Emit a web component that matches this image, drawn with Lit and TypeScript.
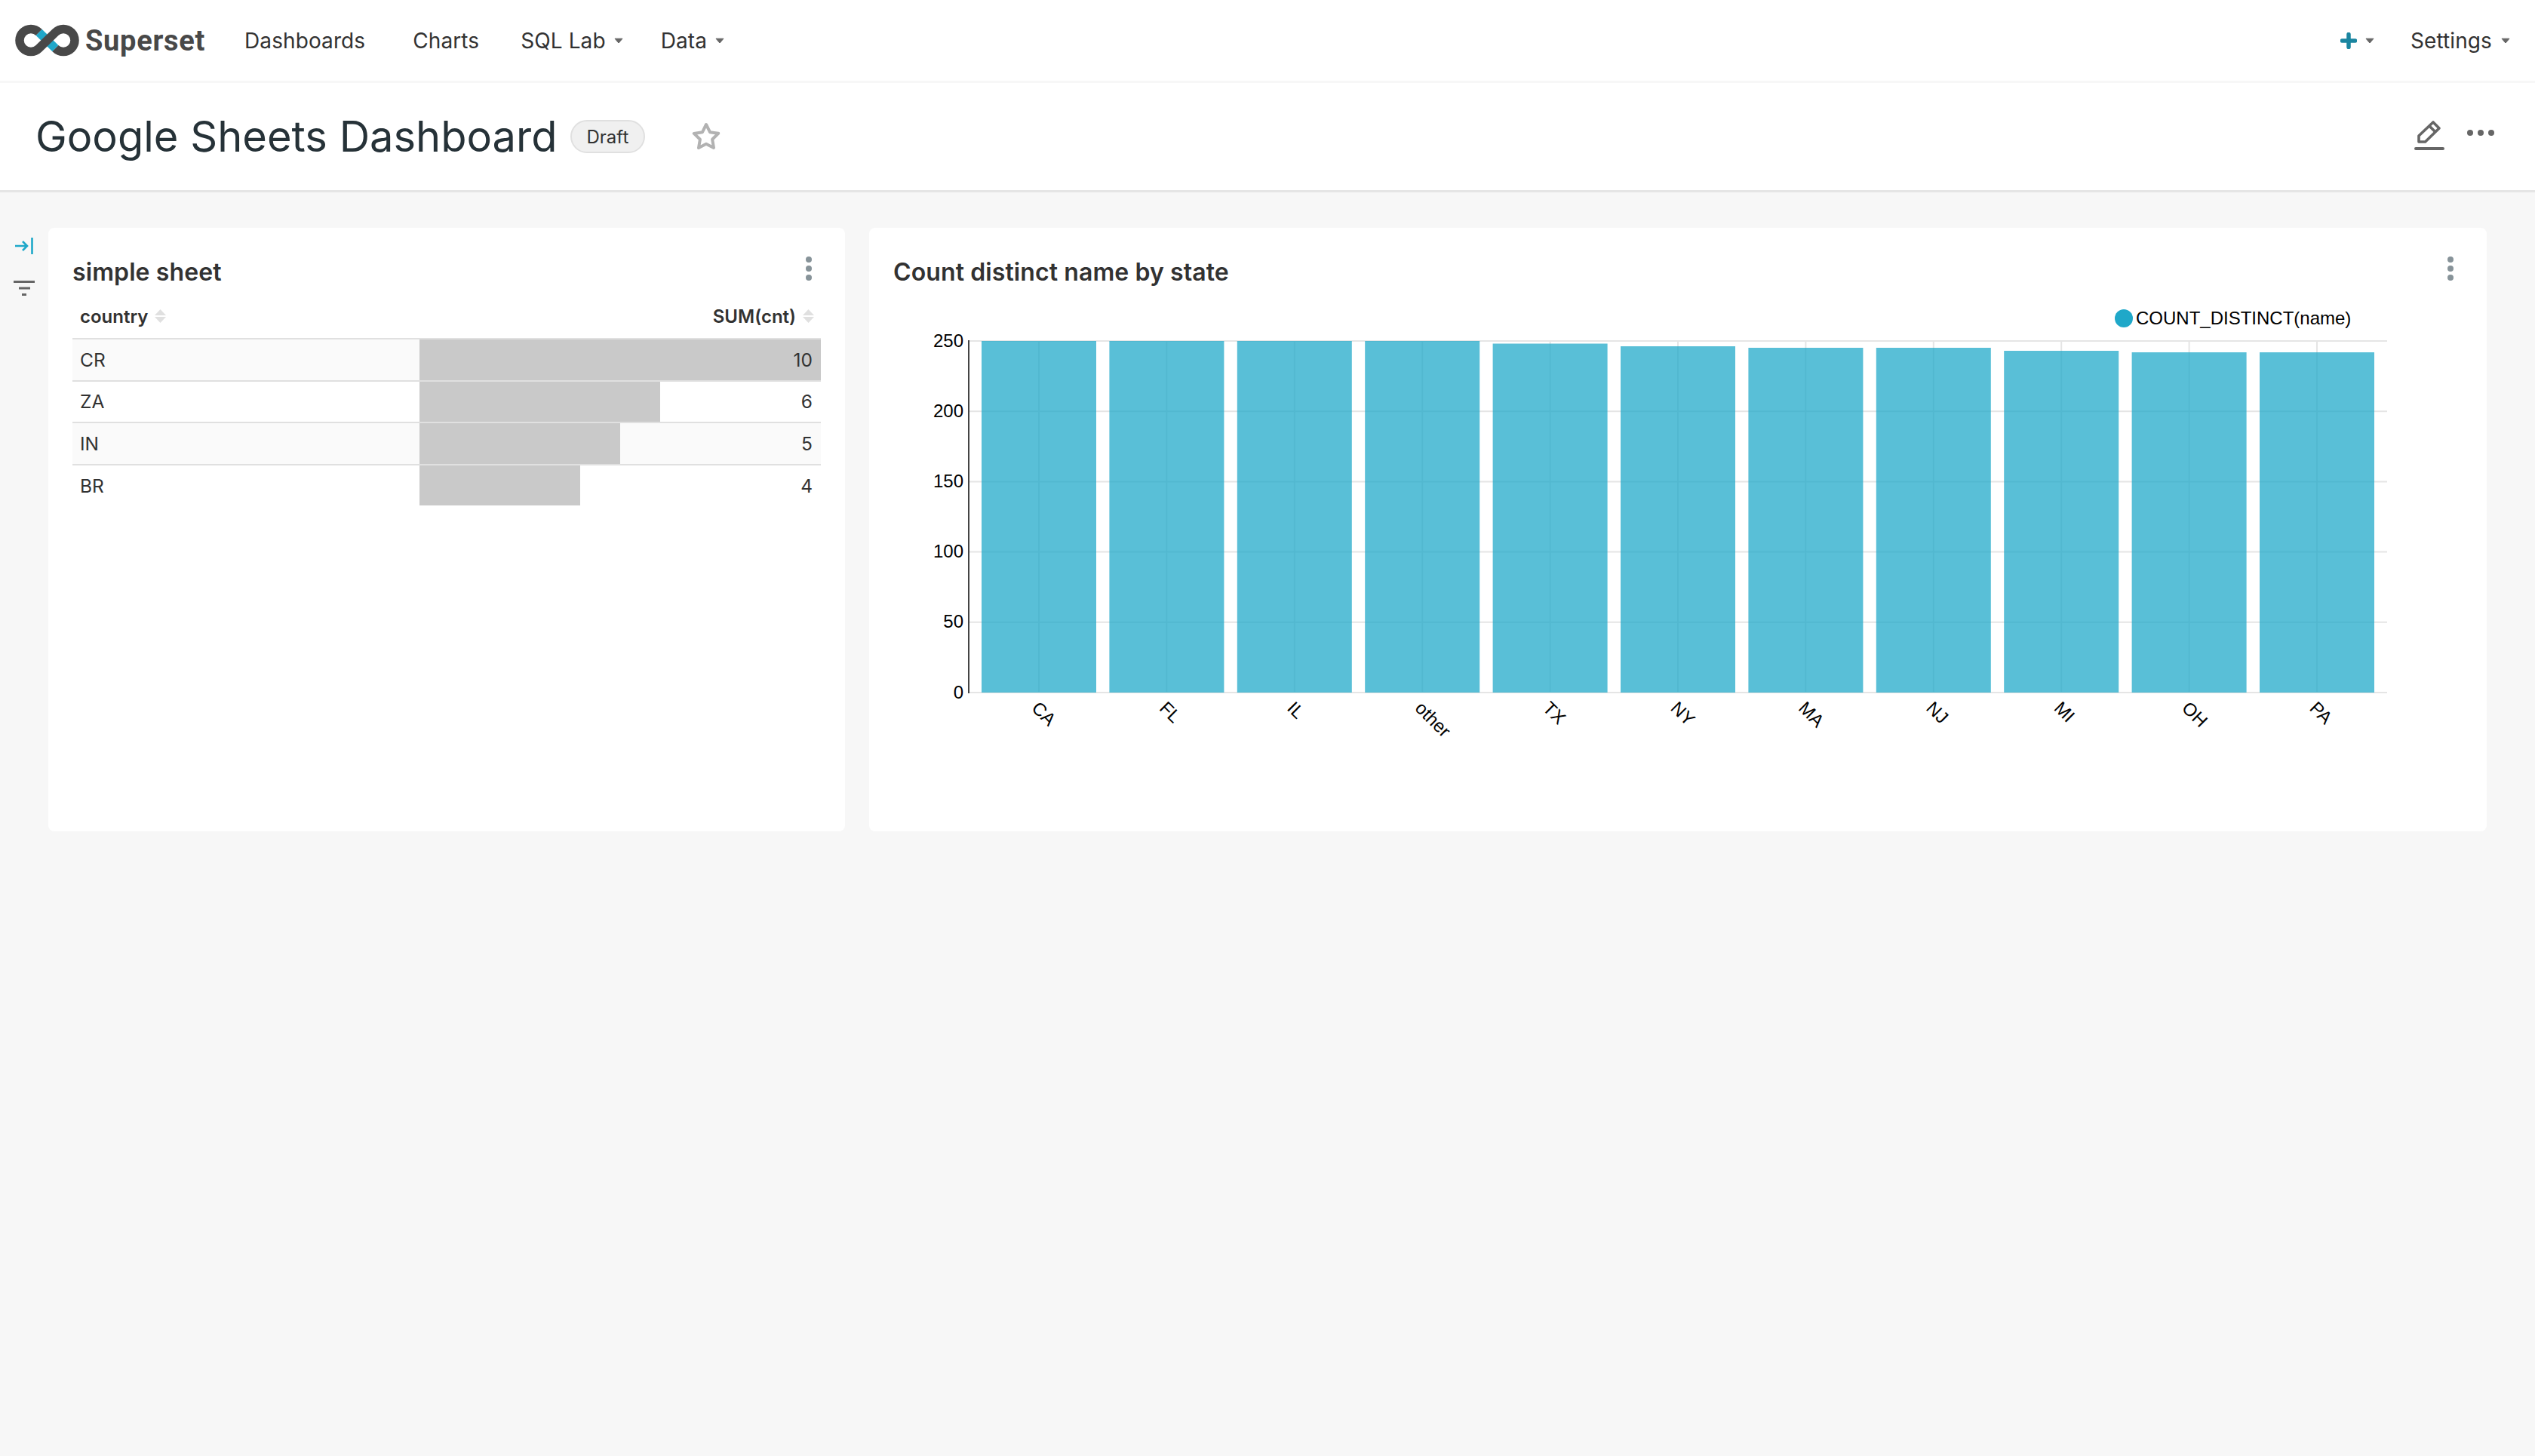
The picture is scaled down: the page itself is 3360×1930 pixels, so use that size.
import { LitElement, html, svg, css } from "lit";
import { customElement } from "lit/decorators.js";

const rows = [
  { country: "CR", cnt: 10 },
  { country: "ZA", cnt: 6 },
  { country: "IN", cnt: 5 },
  { country: "BR", cnt: 4 },
];

// top of each bar, measured in page pixels
const bars = [
  { state: "CA", top: 452 },
  { state: "FL", top: 452 },
  { state: "IL", top: 452 },
  { state: "other", top: 452 },
  { state: "TX", top: 455.5 },
  { state: "NY", top: 459 },
  { state: "MA", top: 461 },
  { state: "NJ", top: 461 },
  { state: "MI", top: 465 },
  { state: "OH", top: 467 },
  { state: "PA", top: 467 },
];

const caret = html`<svg class="caret" width="12" height="8" viewBox="0 0 12 8"><path d="M1 1.2h10L6 7z" fill="#666" stroke="#666" stroke-width="1" stroke-linejoin="round"/></svg>`;

const kebab = html`<svg class="kebab" width="10" height="34" viewBox="0 0 10 34"><circle cx="5" cy="5" r="4" fill="#879399"/><circle cx="5" cy="17" r="4" fill="#879399"/><circle cx="5" cy="29" r="4" fill="#879399"/></svg>`;

const sorter = html`<svg class="sorter" width="15" height="18" viewBox="0 0 15 18"><path d="M7.5 0L15 8H0z M0 10h15L7.5 18z" fill="#e0e0e0"/></svg>`;

@customElement("app-root")
export class AppRoot extends LitElement {
  static styles = css`
    :host {
      display: block;
      min-height: 1930px;
      background: #f7f7f7;
      font-family: Inter, "Noto Sans", sans-serif;
      color: #323232;
    }
    .nav {
      height: 107px;
      border-bottom: 3px solid #f7f7f7;
      background: #fff;
      display: flex;
      align-items: center;
      padding: 0 33px 0 19px;
    }
    .brand {
      display: flex;
      align-items: center;
      gap: 7px;
      font-family: Roboto, sans-serif;
      font-weight: 700;
      font-size: 38px;
      letter-spacing: 0.7px;
      color: #484848;
    }
    .menu {
      display: flex;
      align-items: center;
      margin-left: 52px;
      font-size: 28px;
      letter-spacing: 0.1px;
    }
    .menu .item {
      display: flex;
      align-items: center;
      gap: 11px;
    }
    .menu .dashboards {
      margin-right: 63px;
    }
    .menu .charts {
      margin-right: 55px;
    }
    .menu .sql {
      margin-right: 50px;
    }
    .right {
      margin-left: auto;
      display: flex;
      align-items: center;
      font-size: 28px;
      letter-spacing: 0.1px;
    }
    .right .plus {
      display: flex;
      align-items: center;
      gap: 11px;
      margin-right: 48px;
    }
    .right .settings {
      display: flex;
      align-items: center;
      gap: 12px;
    }
    .header {
      height: 142px;
      border-bottom: 3px solid #e5e5e5;
      background: #fff;
      display: flex;
      align-items: center;
      padding: 0 54px 0 47px;
    }
    .header h1 {
      margin: 0;
      font-size: 56px;
      font-weight: 400;
      line-height: 1;
      color: #263238;
    }
    .pill {
      margin-left: 17px;
      box-sizing: border-box;
      height: 44px;
      padding: 0 20px;
      display: flex;
      align-items: center;
      background: #f0f0f0;
      border: 2px solid #e0e0e0;
      border-radius: 22px;
      font-size: 24px;
    }
    .star {
      margin-left: 62px;
      margin-bottom: 2px;
    }
    .actions {
      margin-left: auto;
      margin-bottom: 4px;
      display: flex;
      align-items: flex-start;
      gap: 30px;
    }
    .dots {
      margin-top: 13px;
    }
    .main {
      display: flex;
      padding-top: 47px;
    }
    .rail {
      width: 64px;
      display: flex;
      flex-direction: column;
      align-items: center;
      padding-top: 13px;
      gap: 35px;
    }
    .card {
      box-sizing: border-box;
      height: 800px;
      background: #fff;
      border-radius: 8px;
      padding: 36px 32px 0;
    }
    .card.table-card {
      width: 1056px;
    }
    .card.chart-card {
      width: 2144px;
      margin-left: 32px;
    }
    .card-head {
      height: 44px;
      display: flex;
      align-items: center;
      justify-content: space-between;
      font-size: 32px;
      font-weight: 600;
      letter-spacing: 0.1px;
      margin-bottom: 10px;
    }
    .kebab {
      display: block;
      margin-right: 11px;
      margin-top: -9px;
    }
    .table {
      display: grid;
      grid-template-columns: 460px 532px;
      font-size: 24.5px;
    }
    .th {
      height: 58px;
      box-sizing: border-box;
      border-bottom: 2px solid #e0e0e0;
      padding: 0 9px 2px 10px;
      display: flex;
      align-items: center;
      gap: 9px;
      font-size: 24px;
      font-weight: 600;
    }
    .th.num {
      justify-content: flex-end;
    }
    .td {
      height: 55.6px;
      box-sizing: border-box;
      border-bottom: 2px solid #e0e0e0;
      padding: 0 11px 0 10px;
      display: flex;
      align-items: center;
      position: relative;
    }
    .td.num {
      justify-content: flex-end;
    }
    .td.odd {
      background: #fafafa;
    }
    .td.last {
      height: 53.6px;
      border-bottom: none;
    }
    .bar {
      position: absolute;
      left: 0;
      top: 0;
      bottom: 0;
      background: #c9c9c9;
    }
    .value {
      position: relative;
    }
    .chart {
      display: block;
    }
    .chart text {
      font-family: "Liberation Sans", Arial, sans-serif;
      font-size: 24px;
      fill: #000;
    }
  `;

  private renderChart() {
    // drawn in page coordinates, svg sits at (1184, 392)
    const pitch = 169.4;
    const ticks = [250, 200, 150, 100, 50, 0];
    const yOf = (v: number) => 918 - (v / 250) * 466;
    return html`<svg class="chart" width="2080" height="660" viewBox="1184 392 2080 660">
      ${ticks.map(
        (t) => svg`<line x1="1284" x2="3164" y1=${yOf(t)} y2=${yOf(t)} stroke="#e5e5e5" stroke-width="2"/>
          <text x="1277" y=${yOf(t) + 7.5} text-anchor="end">${t}</text>`
      )}
      ${bars.map(
        (b, i) => svg`<line x1=${1377 + pitch * i} x2=${1377 + pitch * i} y1="452" y2="918" stroke="#e5e5e5" stroke-width="2"/>`
      )}
      <line x1="1284" x2="1284" y1="451" y2="919" stroke="#444" stroke-width="2"/>
      ${bars.map(
        (b, i) => svg`<rect x=${1301 + pitch * i} y=${b.top} width="152" height=${918 - b.top} fill="#1fa8c9" fill-opacity="0.74"/>
          <text transform="translate(${1366 + pitch * i} 940) rotate(45)">${b.state}</text>`
      )}
      <circle cx="2815" cy="422" r="12" fill="#1fa8c9"/>
      <text x="2831" y="429.5">COUNT_DISTINCT(name)</text>
    </svg>`;
  }

  render() {
    const max = Math.max(...rows.map((r) => r.cnt));
    return html`
      <div class="nav">
        <div class="brand">
          <svg width="87" height="44" viewBox="19 28 87 44">
            <path d="M51.6 38.9L73.4 60.1" stroke="#20a7c9" stroke-width="11.5" fill="none"/>
            <path d="M51.6 38.9A15 15 0 1 0 51.6 60.1L73.4 38.9A15 15 0 1 1 73.4 60.1" stroke="#484848" stroke-width="11.5" fill="none"/>
          </svg>
          <span>Superset</span>
        </div>
        <div class="menu">
          <span class="item dashboards">Dashboards</span>
          <span class="item charts">Charts</span>
          <span class="item sql">SQL Lab ${caret}</span>
          <span class="item">Data ${caret}</span>
        </div>
        <div class="right">
          <span class="plus">
            <svg width="22" height="22" viewBox="0 0 22 22"><path d="M11 2.5v17M2.5 11h17" stroke="#1a85a0" stroke-width="5.5" stroke-linecap="round"/></svg>
            ${caret}
          </span>
          <span class="settings">Settings ${caret}</span>
        </div>
      </div>

      <div class="header">
        <h1>Google Sheets Dashboard</h1>
        <span class="pill">Draft</span>
        <svg class="star" width="38" height="36" viewBox="0 0 38 36"><path d="M19 3l5 10.2 11.2 1.6-8.1 7.9 1.9 11.2L19 28.7 9 34l1.9-11.2-8.1-7.9L14 13.2z" fill="none" stroke="#b2b2b2" stroke-width="4" stroke-linejoin="round"/></svg>
        <div class="actions">
          <svg width="40" height="40" viewBox="0 0 40 40">
            <path d="M6 29V21L25 3l8 8L14.5 29zM20 8l8 8" fill="none" stroke="#666" stroke-width="3.6" stroke-linejoin="round"/>
            <rect x="0" y="36" width="40" height="4" rx="2" fill="#666"/>
          </svg>
          <svg class="dots" width="36" height="8" viewBox="0 0 36 8"><circle cx="4" cy="4" r="4" fill="#666"/><circle cx="18" cy="4" r="4" fill="#666"/><circle cx="32" cy="4" r="4" fill="#666"/></svg>
        </div>
      </div>

      <div class="main">
        <div class="rail">
          <svg width="24" height="22" viewBox="0 0 24 22"><path d="M22.5 0v22M0 11h16M10 5l6 6-6 6" fill="none" stroke="#1fa8c9" stroke-width="2.6"/></svg>
          <svg width="28" height="20" viewBox="0 0 28 20"><path d="M0 1.5h28M7 10h15M11 18.5h6" fill="none" stroke="#666" stroke-width="3"/></svg>
        </div>

        <div class="card table-card">
          <div class="card-head"><span>simple sheet</span>${kebab}</div>
          <div class="table">
            <div class="th">country ${sorter}</div>
            <div class="th num">SUM(cnt) ${sorter}</div>
            ${rows.map((r, i) => {
              const last = i === rows.length - 1;
              const cls = `${i % 2 === 0 ? "odd" : ""} ${last ? "last" : ""}`;
              return html`
                <div class="td ${cls}">${r.country}</div>
                <div class="td num ${cls}">
                  <div class="bar" style="width: ${(r.cnt / max) * 100}%"></div>
                  <span class="value">${r.cnt}</span>
                </div>
              `;
            })}
          </div>
        </div>

        <div class="card chart-card">
          <div class="card-head"><span>Count distinct name by state</span>${kebab}</div>
          ${this.renderChart()}
        </div>
      </div>
    `;
  }
}
